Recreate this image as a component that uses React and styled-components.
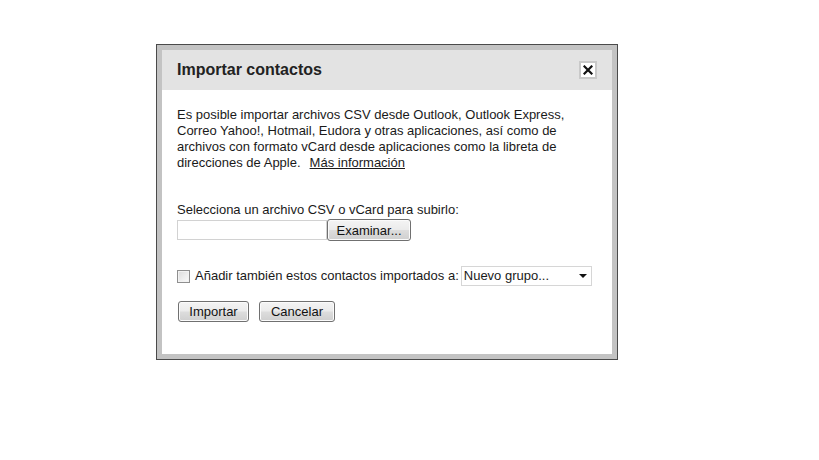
import styled, { createGlobalStyle } from "styled-components";

const GlobalStyle = createGlobalStyle`
  html, body {
    margin: 0;
    padding: 0;
    background: #ffffff;
  }
  body {
    font-family: "Liberation Sans", Arial, sans-serif;
    color: #1a1a1a;
  }
`;

const Page = styled.div`
  width: 819px;
  height: 460px;
  padding: 44px 0 0 156px;
  box-sizing: border-box;
`;

const Dialog = styled.div`
  width: 462px;
  box-sizing: border-box;
  border: 1px solid #4a4a4a;
  background: #c3c3c3;
  padding: 5px;
`;

const TitleBar = styled.div`
  height: 40px;
  background: #e3e3e3;
  display: flex;
  align-items: center;
  justify-content: space-between;
  padding: 0 15px;
`;

const Title = styled.h2`
  margin: 0;
  font-size: 16px;
  font-weight: bold;
  color: #222;
`;

const CloseBox = styled.div`
  width: 18px;
  height: 18px;
  box-sizing: border-box;
  border: 2px solid #c9c9c9;
  background: #fff;
  display: flex;
  align-items: center;
  justify-content: center;
`;

const Body = styled.div`
  background: #fff;
  padding: 17px 15px 32px 15px;
  font-size: 13px;
  line-height: 16px;
  color: #1a1a1a;
`;

const Intro = styled.p`
  margin: 0 0 31px 0;
`;

const MoreLink = styled.a`
  color: #1a1a1a;
  text-decoration: underline;
  padding-left: 9px;
`;

const FileLabel = styled.div`
  margin-bottom: 1px;
`;

const FileRow = styled.div`
  display: flex;
  align-items: center;
  height: 22px;
  margin-bottom: 25px;
`;

const FileBox = styled.div`
  width: 150px;
  height: 20px;
  box-sizing: border-box;
  border: 1px solid #d2d2d2;
  background: #fff;
`;

const Btn = styled.button`
  font-family: "Liberation Sans", Arial, sans-serif;
  font-size: 13px;
  color: #111;
  height: ${(p) => p.$h || 21}px;
  width: ${(p) => p.$w}px;
  box-sizing: border-box;
  border: 1px solid #707070;
  border-radius: 3px;
  padding: 0;
  background: linear-gradient(
    to bottom,
    #f4f4f4 0%,
    #ebebeb 48%,
    #dddddd 52%,
    #cfcfcf 100%
  );
  box-shadow: inset 0 0 0 1px #fbfbfb;
  margin-right: ${(p) => p.$mr || 0}px;
`;

const CheckRow = styled.div`
  display: flex;
  align-items: center;
  height: 20px;
  margin-bottom: 15px;
`;

const Check = styled.span`
  width: 13px;
  height: 13px;
  box-sizing: border-box;
  border: 1px solid #8f8f8f;
  background: linear-gradient(135deg, #dcdcdc 0%, #fbfbfb 100%);
  box-shadow: inset 0 0 0 1px #f2f2f2;
  margin-right: 5px;
`;

const Select = styled.div`
  width: 131px;
  height: 20px;
  box-sizing: border-box;
  border: 1px solid #d6d6d6;
  background: #fff;
  display: flex;
  align-items: center;
  justify-content: space-between;
  padding: 0 4px 0 2px;
  margin-left: 2px;
`;

const Arrow = styled.span`
  width: 0;
  height: 0;
  border-left: 4px solid transparent;
  border-right: 4px solid transparent;
  border-top: 4px solid #111;
`;

const Actions = styled.div`
  display: flex;
  padding-left: 1px;
`;

export default function App() {
  return (
    <Page>
      <GlobalStyle />
      <Dialog>
        <TitleBar>
          <Title>Importar contactos</Title>
          <CloseBox>
            <svg width="10" height="10" viewBox="0 0 10 10">
              <path
                d="M1.5 1.5 L8.5 8.5 M8.5 1.5 L1.5 8.5"
                stroke="#111"
                strokeWidth="2.2"
                strokeLinecap="square"
              />
            </svg>
          </CloseBox>
        </TitleBar>
        <Body>
          <Intro>
            Es posible importar archivos CSV desde Outlook, Outlook Express,
            Correo Yahoo!, Hotmail, Eudora y otras aplicaciones, así como de
            archivos con formato vCard desde aplicaciones como la libreta de
            direcciones de Apple.
            <MoreLink href="#">Más información</MoreLink>
          </Intro>
          <FileLabel>Selecciona un archivo CSV o vCard para subirlo:</FileLabel>
          <FileRow>
            <FileBox />
            <Btn $w={84} $h={22}>Examinar...</Btn>
          </FileRow>
          <CheckRow>
            <Check />
            Añadir también estos contactos importados a:
            <Select>
              Nuevo grupo...
              <Arrow />
            </Select>
          </CheckRow>
          <Actions>
            <Btn $w={71} $mr={10}>Importar</Btn>
            <Btn $w={76}>Cancelar</Btn>
          </Actions>
        </Body>
      </Dialog>
    </Page>
  );
}
